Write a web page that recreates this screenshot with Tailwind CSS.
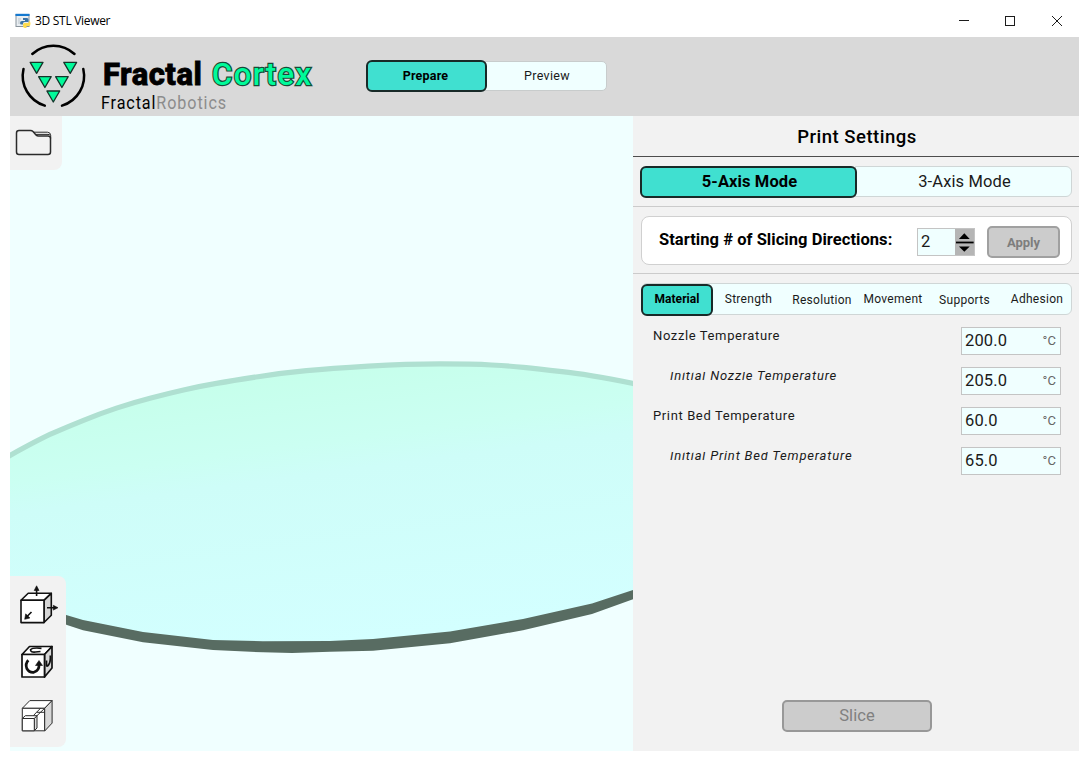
<!DOCTYPE html>
<html lang="en">
<head>
<meta charset="utf-8">
<title>3D STL Viewer</title>
<script src="https://cdn.jsdelivr.net/npm/@tailwindcss/browser@4"></script>
</head>
<body class="bg-white">
<div class="w-[1089px] h-[761px] overflow-hidden bg-white px-[10px] pb-[10px] flex flex-col font-['Roboto',sans-serif] text-[#1a1a1a] whitespace-nowrap">

  <!-- Title bar -->
  <div class="h-[37px] shrink-0 flex items-center pt-[5px] pl-[5px]">
    <svg class="w-4 h-4 -mt-px" viewBox="0 0 16 16">
      <rect x="1" y="1.500" width="13" height="12" fill="#e9eef2" stroke="#8a949c"/>
      <rect x=".5" y=".8" width="14" height="2.200" fill="#1479d0"/>
      <path d="M3 6h3M3 8h2M3 10h2" stroke="#b9c3ca"/>
      <path d="M8 5h4q1.500 0 1.500 1.500v2.500h-4q-1.500 0-1.500 1.500v1H6.500Q5 11.500 5 10q0-2 2-2h3V7H8z" fill="#3c74a6"/>
      <path d="M14 8q1.500 0 1.500 2.500T14 13h-2.500v2H10q-2 0-2-1.800V11.500Q8 10 9.500 10H13q1 0 1-2z" fill="#ffdc4e"/>
    </svg>
    <span class="ml-[4px] text-[12px] leading-4 font-['Open_Sans',sans-serif] tracking-[-0.300px] text-black">3D STL Viewer</span>
    <svg class="ml-auto mr-[15px] w-[106px] h-3" viewBox="0 0 106 12" fill="none" stroke="#1c1c1c">
      <path d="M1 5.500h10"/><rect x="47.500" y="1.500" width="9" height="9"/><path d="M94 1l10 10M104 1L94 11"/>
    </svg>
  </div>

  <!-- Application header -->
  <header class="h-[79px] shrink-0 bg-[#d9d9d9] flex items-start">
    <svg class="ml-[8px] mt-[5px] w-[70px] h-[70px]" viewBox="18 42 70 70" fill="none">
      <g stroke="#000" stroke-width="2.500" stroke-linecap="round">
        <path d="M32.300 54A31 31 0 0 1 74.500 54"/>
        <path d="M23.500 69A31 31 0 0 0 44.800 105.600"/>
        <path d="M83.300 69A31 31 0 0 1 62 105.600"/>
      </g>
      <g fill="#00fa9a" stroke="#14342a" stroke-width="1.300" stroke-linejoin="round">
        <path d="M30.200 62.300h12.800l-6.400 11z"/><path d="M63.800 62.300h12.800l-6.400 11z"/>
        <path d="M38.600 76.700h12.600l-6.300 10.800z"/><path d="M55.600 76.700h12.600l-6.300 10.800z"/>
        <path d="M46.900 91h12.800l-6.400 11z"/>
      </g>
    </svg>
    <div class="ml-[15px] mt-[20px] w-[263px] flex flex-col">
      <div class="flex text-[31px] leading-[36px]">
        <span class="w-[109px] font-extrabold text-black tracking-[0.500px] [-webkit-text-stroke:0.800px_#000]">Fractal</span>
        <span class="font-medium text-[#00fa9a] tracking-[1.400px] [-webkit-text-stroke:2.400px_#174a38] [paint-order:stroke_fill]">Cortex</span>
      </div>
      <div class="-mt-[2px] -ml-[2px] origin-left scale-x-[0.850] text-[19px] leading-[23px] tracking-[1.050px]"><span class="text-black">Fractal</span><span class="text-[#8c8c8c]">Robotics</span></div>
    </div>
    <div class="mt-[23px] flex text-[12.500px] leading-[28px] text-center">
      <div class="w-[121px] h-8 rounded-md border-2 border-[#182a28] bg-[#40e0d0] font-bold text-black tracking-[0.200px] pr-[2px] -mr-[2px] z-10">Prepare</div>
      <div class="mt-[1px] w-[122px] h-[30px] rounded-r-[5px] border border-[#c8cccc] bg-[#f0ffff] tracking-[0.300px] pl-[2px]">Preview</div>
    </div>
  </header>

  <main class="h-[635px] flex">
    <!-- 3D viewport -->
    <section class="relative w-[623px] h-[635px] shrink-0 bg-[#f0ffff]">
      <svg class="block w-[623px] h-[635px]" viewBox="10 116 623 635">
        <defs><linearGradient id="bed" gradientUnits="userSpaceOnUse" x1="330" y1="366" x2="366" y2="640">
          <stop offset="0" stop-color="#c6ffeb"/><stop offset=".27" stop-color="#cbfff2"/><stop offset=".38" stop-color="#cefdf8"/><stop offset="1" stop-color="#d3ffff"/>
        </linearGradient></defs>
        <path fill="url(#bed)" d="M10 457L40 440L67 428L100 415L133 404L167 395L200 387L233 381L283 374L330 369L363 367L407 364L473 364L510 366L537 369L587 375L633 384V595L592 609L523 625L450 637L373 645L292 647L213 645L143 637L83 625L67 620L10 600z"/>
        <path transform="translate(0 2.500)" fill="none" stroke="#afe0d1" stroke-width="5.200" d="M2 457.500L10 452.900Q40 436.200 53.500 430.400Q67 424.400 83.500 417.800Q100 411.100 116.500 405.600Q133 400.100 150 395.700Q167 391.300 183.500 387.500Q200 383.700 216.500 380.900Q233 378 258 374.200Q283 370.400 306.500 368.200Q330 366 368.500 363.600Q407 361.400 440 361.400Q473 361.400 491.500 362.500Q510 363.400 523.500 364.900Q537 366.200 562 369.200Q587 371.800 633 381L641 382.800"/>
        <path fill="#586c62" d="M60 613L67 615.300L83 620L143 632L213 640L263 641.300L330 641L373 639L450 631.500L523 619L592 603.500L633 590V599.300L592 614L523 630.300L450 643.300L373 650.700L330 651.700L292 653L263 652.300L213 650L143 642.300L83 630.300L67 625L60 622z"/>
      </svg>
      <!-- File tool -->
      <div class="absolute left-0 top-0 w-[52px] h-[54px] rounded-br-[8px] bg-[#f2f2f2]">
        <svg class="ml-[5px] mt-[13px] w-[38px] h-[28px]" viewBox="15 129 38 28" fill="none" stroke="#2b2b2b" stroke-width="1.500" stroke-linejoin="round">
          <path d="M16.500 133q0-2.500 2.500-2.500h11.500q1.500 0 2.500 1l3 3.500q1 1 2.500 1h9.500q2.500 0 2.500 2.500v13.500q0 2.500-2.500 2.500H19q-2.500 0-2.500-2.500z"/>
          <path d="M33.500 132.200H47.500q3 0 3.200 3.300v3M36 134.400H48q1.700 0 2.500 1.300" stroke-width="1"/>
        </svg>
      </div>
      <!-- Transform tools -->
      <div class="absolute left-0 top-[460px] w-[56px] h-[171px] rounded-r-[8px] bg-[#f2f2f2]">
        <svg class="w-[56px] h-[171px]" viewBox="10 576 56 171" fill="#fff" stroke="#111" stroke-linejoin="round">
          <g stroke-width="1.600">
            <path d="M21 600.300l7.200-7h23l-7.200 7z"/><path d="M44 600.300l7.300-7v22l-7.300 7.200z" fill="#d5d5d5"/><path d="M21 600.300H44v22.300H21z"/>
            <path d="M36.600 596V589M47 607.700h7M31.500 612l-4.500 4.500" fill="none"/>
            <path d="M36.600 585.800l2.400 4.700h-4.800zM58 607.700l-4.700 2.400v-4.800zM24.700 619.300l1-5.500 4.200 4.200z" fill="#111" stroke-width=".6"/>
          </g>
          <g stroke-width="1.700">
            <path d="M22 654.500l7.500-8h22.500l-7.500 8z"/><path d="M44.500 654.500l7.500-8v21.500l-7.500 9z" fill="#d8d8d8"/><path d="M22 654.500h22.500V677H22z"/>
            <path d="M28.300 660.200q-3.300 3.500-1.500 8.300 2.500 4.300 7 3.800 5.500-1.500 5.300-8.300" fill="none" stroke-width="2.700"/>
            <path d="M39 660.500l3.500 5h-7z" fill="#111" stroke-width=".6"/>
            <path d="M41.500 648.300q-9-1-11 1.500 0 2.700 5 2.200l5-.5" fill="none"/>
            <path d="M50.300 655.500q.5 6-1.500 9-1.500 2.500-2.300 1v-5" fill="none"/>
          </g>
          <g stroke-width="1" stroke="#2b2b2b">
            <path d="M22.300 708.300l7.500-7.700h22.300l-7.500 7.700z"/><path d="M44.600 708.300l7.500-7.700v22.500l-7.500 8z" fill="#d8d8d8"/><path d="M22.300 708.300h22.300v22.500H22.300z"/>
            <path d="M34.300 718.500l2.700-2.700V728l-2.700 2.800z" fill="#ddd"/><path d="M22.300 718.500l3-2.800h11.700l-2.800 2.800z"/><path d="M22.300 718.500h12v12.300h-12z"/>
            <path d="M33.500 715.500l3-3.200h8M37 715.700l7.600-7.400M36.500 712.300l4-4" fill="none"/>
          </g>
        </svg>
      </div>
    </section>

    <!-- Print settings -->
    <aside class="w-[446px] h-[635px] bg-[#f2f2f2] flex flex-col">
      <h1 class="h-[41px] shrink-0 border-b-[1.500px] border-[#4d4d4d] pl-[2px] text-center text-[18.500px] leading-[42px] font-medium text-black tracking-[0.500px]">Print Settings</h1>
      <div class="h-[50px] shrink-0 border-b-[1.500px] border-[#cbcbcb] pt-[9px] pl-[7px] flex text-[16.500px] text-center">
        <div class="w-[217px] h-[32px] rounded-md border-2 border-[#182a28] bg-[#40e0d0] pl-[2px] font-bold text-[16.500px] leading-[27px] text-black tracking-[0.100px] -mr-[2px] z-10">5-Axis Mode</div>
        <div class="w-[217px] h-[31px] rounded-r-[6px] border-[1.500px] border-[#cfd6d6] bg-[#f0ffff] pl-[2px] leading-[29px] tracking-[0.120px]">3-Axis Mode</div>
      </div>
      <div class="h-[67px] shrink-0 border-b-[1.500px] border-[#cbcbcb] pt-[9px] pl-[8px]">
        <div class="w-[431px] h-[49px] rounded-[8px] border-[1.500px] border-[#d0d0d0] bg-white flex items-start pl-[17px]">
          <span class="w-[258px] mt-[12px] text-[16.500px] leading-[22px] font-bold text-black tracking-[0.050px]">Starting # of Slicing Directions:</span>
          <div class="mt-[11px] w-[58px] h-[28px] flex border border-[#c4c4c4] bg-[#f0ffff]">
            <span class="w-[38px] pl-[3px] text-[16.500px] leading-[26px]">2</span>
            <svg class="w-[19px] h-[26px] bg-[#b5b5b5]" viewBox="0 0 19 26"><path d="M9.500 4l5.500 6H4zM9.500 23L4 17.500h11z" fill="#000"/><path d="M1 13.500h18" stroke="#000" stroke-width="1.800"/></svg>
          </div>
          <div class="ml-[12px] mt-[9px] w-[73px] h-[32px] rounded-[5px] border-2 border-[#a0a0a0] bg-[#ccc] text-center text-[13px] leading-[29px] font-bold text-[#7d7d7d]">Apply</div>
        </div>
      </div>
      <nav class="mt-[9px] ml-[8px] w-[431px] h-[32px] shrink-0 rounded-[6px] border-[1.500px] border-[#cfd6d6] bg-[#f0ffff] flex text-[12px] leading-[30px] text-center tracking-[0.280px]">
        <div class="-ml-[1px] w-[72px] h-[32px] rounded-md border-2 border-[#182a28] bg-[#40e0d0] font-bold text-black leading-[27px] tracking-[0.050px]">Material</div>
        <div class="w-[71px]">Strength</div><div class="w-[76px] pt-[1px]">Resolution</div><div class="w-[66px]">Movement</div><div class="w-[77px] pt-[1px]">Supports</div><div class="w-[68px]">Adhesion</div>
      </nav>
      <div class="mt-[12px] pl-[20px] pr-[18px] flex flex-col gap-[12px] text-[13px] leading-[18px] tracking-[0.620px]">
        <div class="h-[28px] flex justify-between"><span>Nozzle Temperature</span>
          <div class="w-[100px] h-[28px] border-[1.500px] border-[#c4c4c4] bg-[#f0ffff] flex justify-between pl-[3px] pr-[4px] leading-[26px] tracking-[0.150px]"><span class="text-[16.500px]">200.0</span><span class="text-[#666]">°C</span></div></div>
        <div class="h-[28px] flex justify-between"><span class="pl-[17px] italic tracking-[0.800px]"><span class="inline-block [clip-path:inset(5px_0_0_-3px)]">Initial</span> Nozz<span class="inline-block [clip-path:inset(5px_0_0_-3px)]">l</span>e Temperature</span>
          <div class="w-[100px] h-[28px] border-[1.500px] border-[#c4c4c4] bg-[#f0ffff] flex justify-between pl-[3px] pr-[4px] leading-[26px] tracking-[0.150px]"><span class="text-[16.500px]">205.0</span><span class="text-[#666]">°C</span></div></div>
        <div class="h-[28px] flex justify-between"><span>Print Bed Temperature</span>
          <div class="w-[100px] h-[28px] border-[1.500px] border-[#c4c4c4] bg-[#f0ffff] flex justify-between pl-[3px] pr-[4px] leading-[26px] tracking-[0.150px]"><span class="text-[16.500px]">60.0</span><span class="text-[#666]">°C</span></div></div>
        <div class="h-[28px] flex justify-between"><span class="pl-[17px] italic tracking-[0.800px]"><span class="inline-block [clip-path:inset(5px_0_0_-3px)]">Initial</span> Print Be<span class="inline-block [clip-path:inset(5px_0_0_-3px)]">d</span> Temperature</span>
          <div class="w-[100px] h-[28px] border-[1.500px] border-[#c4c4c4] bg-[#f0ffff] flex justify-between pl-[3px] pr-[4px] leading-[26px] tracking-[0.150px]"><span class="text-[16.500px]">65.0</span><span class="text-[#666]">°C</span></div></div>
      </div>
      <div class="mt-auto mb-[19px] ml-[149px] w-[150px] h-[32px] rounded-[5px] border-2 border-[#989898] bg-[#ccc] text-center text-[16.500px] leading-[27px] text-[#808080] tracking-[0.100px]">Slice</div>
    </aside>
  </main>
</div>
</body>
</html>
